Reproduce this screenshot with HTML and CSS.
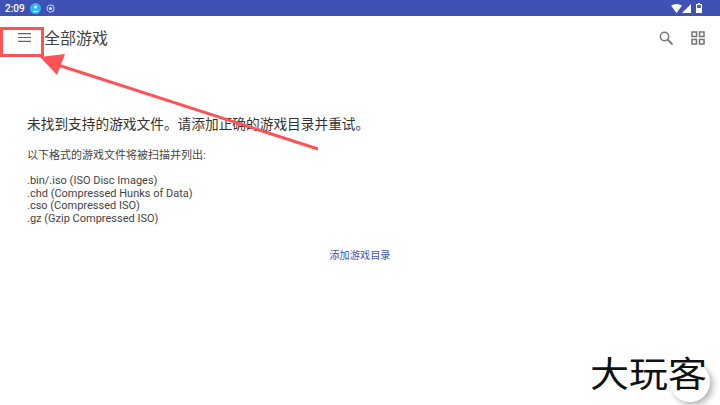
FILE: index.html
```html
<!DOCTYPE html>
<html lang="zh">
<head>
    <meta charset="UTF-8">
    <title>全部游戏</title>
    <link rel="stylesheet" href="styles.css">
</head>
<body>
    <div class="statusbar">
        <div class="status-left">
            <span class="clock">2:09</span>
            <span class="badge">
                <svg width="11" height="11" viewBox="0 0 11 11"><circle cx="5.5" cy="5.5" r="5.5" fill="#29b6f6"/><circle cx="5.5" cy="4" r="1.5" fill="#fff"/><path d="M3 8.5h5" stroke="#fff" stroke-width="1.3"/></svg>
            </span>
            <svg width="9" height="9" viewBox="0 0 9 9"><circle cx="4.5" cy="4.5" r="3.5" fill="none" stroke="#c5cae9" stroke-width="1.1"/><circle cx="4.5" cy="4.5" r="1.6" fill="#e8eaf6"/></svg>
        </div>
        <div class="status-right">
            <svg width="11" height="9" viewBox="0 0 11 9"><path d="M0 1.5Q5.5-1.5 11 1.5L5.5 9Z" fill="#fff"/></svg>
            <svg width="9" height="9" viewBox="0 0 9 9"><path d="M9 0V9H0Z" fill="#fff"/></svg>
            <svg class="battery" width="6" height="10" viewBox="0 0 6 10"><path d="M2 0H4V1H6V10H0V1H2Z" fill="#fff"/><path d="M1.2 2H4.8V5H1.2Z" fill="#3f51b5"/></svg>
        </div>
    </div>

    <div class="toolbar">
        <button class="menu-btn">
            <svg width="13" height="9" viewBox="0 0 13 9"><path d="M0 .6h13M0 4.5h13M0 8.4h13" stroke="#666" stroke-width="1.2"/></svg>
        </button>
        <div class="title">全部游戏</div>
        <div class="actions">
            <svg width="16" height="16" viewBox="0 0 16 16"><circle cx="6.5" cy="6.5" r="4.2" fill="none" stroke="#757575" stroke-width="1.5"/><path d="M9.6 9.6L14.5 14.5" stroke="#757575" stroke-width="1.8"/></svg>
            <svg width="14" height="14" viewBox="0 0 14 14"><path d="M1 1h4.5v4.5H1zM8.5 1H13v4.5H8.5zM1 8.5h4.5V13H1zM8.5 8.5H13V13H8.5z" fill="none" stroke="#757575" stroke-width="1.5"/></svg>
        </div>
    </div>

    <div class="content">
        <h2 class="empty-title">未找到支持的游戏文件。请添加正确的游戏目录并重试。</h2>
        <p class="intro">以下格式的游戏文件将被扫描并列出:</p>
        <ul class="formats">
            <li>.bin/.iso (ISO Disc Images)</li>
            <li>.chd (Compressed Hunks of Data)</li>
            <li>.cso (Compressed ISO)</li>
            <li>.gz (Gzip Compressed ISO)</li>
        </ul>
        <div class="add-row"><a class="add-link" href="#">添加游戏目录</a></div>
    </div>

    <svg class="annotation" width="720" height="405" viewBox="0 0 720 405">
        <rect x="1.5" y="28.5" width="41" height="27" fill="none" stroke="#ff5257" stroke-width="3"/>
        <path d="M318 149L58 65" stroke="#ff5257" stroke-width="3"/>
        <path d="M40 57L65 54L57 75Z" fill="#ff5257"/>
    </svg>

    <div class="watermark">
        <span class="wm-circle"></span>
        <span class="wm-text">大玩客</span>
    </div>
</body>
</html>
```

FILE: styles.css
```css
* {
    box-sizing: border-box;
    margin: 0;
    padding: 0;
}

html, body {
    width: 720px;
    height: 405px;
    overflow: hidden;
}

body {
    position: relative;
    background: #fff;
    color: #212121;
    font-family: Roboto, "Noto Sans CJK SC", sans-serif;
}

.statusbar {
    display: flex;
    align-items: center;
    justify-content: space-between;
    height: 16px;
    padding: 0 18px 0 5px;
    background: #3f51b5;
    color: #fff;
}

.status-left, .status-right {
    display: flex;
    align-items: center;
}

.status-left {
    gap: 5px;
}

.clock {
    font-size: 10px;
    font-weight: 500;
}

.badge {
    display: flex;
}

.battery {
    margin-left: 5px;
}

.toolbar {
    display: flex;
    align-items: center;
    height: 44px;
    padding-right: 15px;
}

.menu-btn {
    display: flex;
    align-items: center;
    justify-content: center;
    width: 44px;
    height: 44px;
    padding: 0 0 0 5px;
    margin-top: -1px;
    border: none;
    background: none;
}

.title {
    flex: 1;
    font-size: 16px;
    color: #424242;
    margin-top: -3px;
}

.actions {
    display: flex;
    align-items: center;
    gap: 17px;
    margin-top: -1px;
}

.content {
    padding: 55px 27px 0;
}

.empty-title {
    font-size: 13.7px;
    font-weight: 400;
    line-height: 18px;
    color: #333;
}

.intro {
    margin-top: 16px;
    font-size: 11px;
    line-height: 14px;
    color: #444;
}

.formats {
    margin-top: 12px;
    list-style: none;
    font-size: 11px;
    line-height: 12.7px;
    color: #444;
}

.add-row {
    margin-top: 18px;
    text-align: center;
}

.add-link {
    font-size: 10.2px;
    line-height: 14px;
    color: #3f51b5;
    text-decoration: none;
}

.annotation {
    position: absolute;
    top: 0;
    left: 0;
}

.watermark {
    position: absolute;
    right: 10px;
    bottom: 3px;
    width: 124px;
    height: 44px;
}

.wm-circle {
    position: absolute;
    right: 0;
    bottom: 0;
    width: 40px;
    height: 40px;
    border-radius: 50%;
    background: #fff;
    box-shadow: 3px 3px 6px rgba(0, 0, 0, 0.3);
}

.wm-text {
    position: absolute;
    left: 4px;
    bottom: 9px;
    font-size: 39px;
    line-height: 39px;
    white-space: nowrap;
    color: #111;
    transform: scaleY(0.9);
    transform-origin: left bottom;
}
```
